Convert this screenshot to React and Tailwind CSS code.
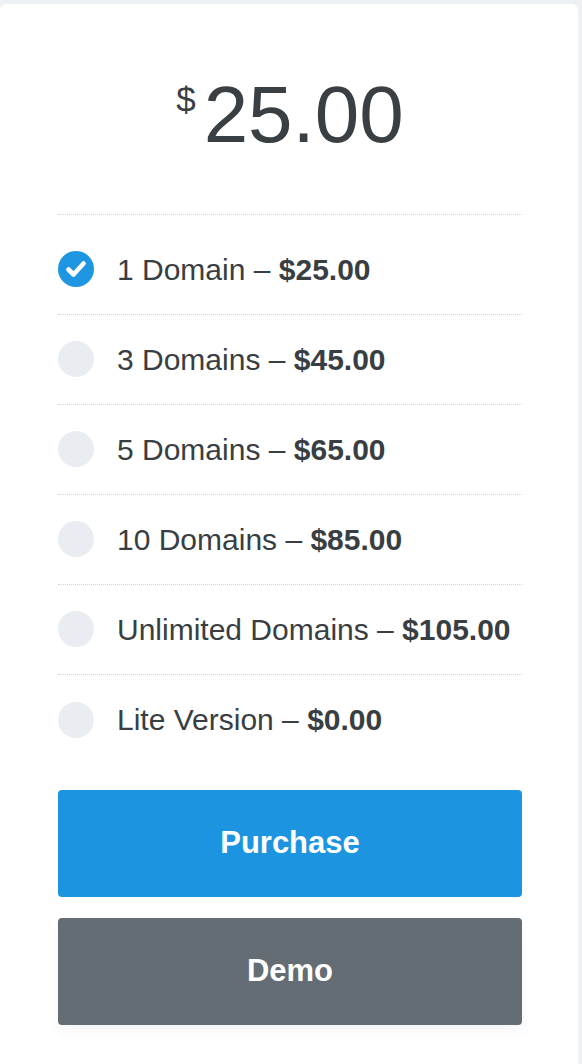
import React from "react";

const items = [
  { label: "1 Domain", price: "$25.00", checked: true },
  { label: "3 Domains", price: "$45.00" },
  { label: "5 Domains", price: "$65.00" },
  { label: "10 Domains", price: "$85.00" },
  { label: "Unlimited Domains", price: "$105.00" },
  { label: "Lite Version", price: "$0.00" },
];

function Check({ checked }) {
  if (checked) {
    return (
      <span className="flex h-[36px] w-[36px] shrink-0 items-center justify-center rounded-full bg-[#1e96e1]">
        <svg width="36" height="36" viewBox="0 0 36 36" fill="none">
          <polyline
            points="10.5,18.5 15.5,23.5 25.5,12.5"
            stroke="white"
            strokeWidth="4.6"
            strokeLinecap="round"
            strokeLinejoin="round"
          />
        </svg>
      </span>
    );
  }
  return <span className="h-[36px] w-[36px] shrink-0 rounded-full bg-[#e9edf1]" />;
}

export default function App() {
  return (
    <div
      className="h-[1064px] overflow-hidden bg-[#eef1f4] pt-[4px]"
      style={{ fontFamily: '"Liberation Sans", Arial, sans-serif' }}
    >
      <div className="w-[578px] rounded-t-[6px] bg-white pb-[80px] pl-[58px]">
        <div className="w-[464px]">
          <div className="flex items-start justify-center border-b border-dotted border-[#cfd3d6] pb-[59px] pt-[71px] text-[#3a3f43]">
            <span className="mr-[8px] mt-[8px] text-[35px] leading-[34px]">$</span>
            <span className="text-[80px] leading-[80px]">25.00</span>
          </div>
          <ul className="pt-[10px]">
            {items.map((it, i) => (
              <li
                key={i}
                className={
                  "flex h-[90px] items-center gap-[23px] pb-[1px] text-[30px] text-[#393e42] " +
                  (i < items.length - 1 ? "border-b border-dotted border-[#cfd3d6]" : "")
                }
              >
                <Check checked={it.checked} />
                <span>
                  {it.label} – <b className="font-bold">{it.price}</b>
                </span>
              </li>
            ))}
          </ul>
          <div className="mt-[25px] flex flex-col gap-[21px]">
            <button className="h-[107px] w-full rounded-[4px] bg-[#1c94e0] text-[31px] font-bold text-white">
              Purchase
            </button>
            <button className="h-[107px] w-full rounded-[4px] bg-[#646d73] text-[31px] font-bold text-white shadow-[0_8px_12px_rgba(30,60,90,0.04)]">
              Demo
            </button>
          </div>
        </div>
      </div>
    </div>
  );
}
